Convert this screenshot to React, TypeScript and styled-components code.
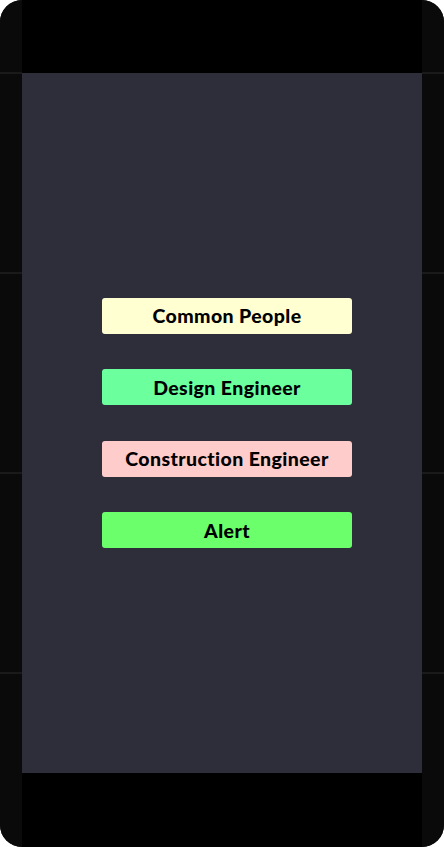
import React from "react";
import styled, { createGlobalStyle } from "styled-components";

const Global = createGlobalStyle`
  html, body { margin: 0; padding: 0; background: #ffffff; }
  * { box-sizing: border-box; }
`;

const Device = styled.div`
  width: 444px;
  height: 847px;
  border-radius: 22px;
  overflow: hidden;
  background: #0a0a0a;
  display: grid;
  grid-template-columns: 22px 400px 22px;
`;

const Rail = styled.div`
  background: repeating-linear-gradient(
    to bottom,
    #0a0a0a 0px,
    #0a0a0a 72px,
    #1a1a1a 72px,
    #1a1a1a 74px,
    #0a0a0a 74px,
    #0a0a0a 200px
  );
`;

const Screen = styled.div`
  display: grid;
  grid-template-rows: 73px 700px 1fr;
  background: #000000;
`;

const Content = styled.main`
  background: #2e2d3a;
  display: flex;
  flex-direction: column;
  align-items: center;
  justify-content: center;
  gap: 35.5px;
  padding-left: 10px;
`;

const RoleButton = styled.button<{ $bg: string }>`
  width: 250px;
  height: 36px;
  border: none;
  border-radius: 3px;
  background: ${(p) => p.$bg};
  color: #000000;
  font-family: Lato, "Open Sans", sans-serif;
  font-weight: 900;
  font-size: 19.5px;
  letter-spacing: 0.4px;
  display: flex;
  align-items: center;
  justify-content: center;
  padding: 0;
  cursor: pointer;
`;

const buttons = [
  { label: "Common People", bg: "#ffffd2" },
  { label: "Design Engineer", bg: "#6bff9e" },
  { label: "Construction Engineer", bg: "#ffcccc" },
  { label: "Alert", bg: "#6bff6b" },
];

export default function App() {
  return (
    <>
      <Global />
      <Device>
        <Rail />
        <Screen>
          <div />
          <Content>
            {buttons.map((b) => (
              <RoleButton key={b.label} $bg={b.bg}>
                {b.label}
              </RoleButton>
            ))}
          </Content>
          <div />
        </Screen>
        <Rail />
      </Device>
    </>
  );
}
